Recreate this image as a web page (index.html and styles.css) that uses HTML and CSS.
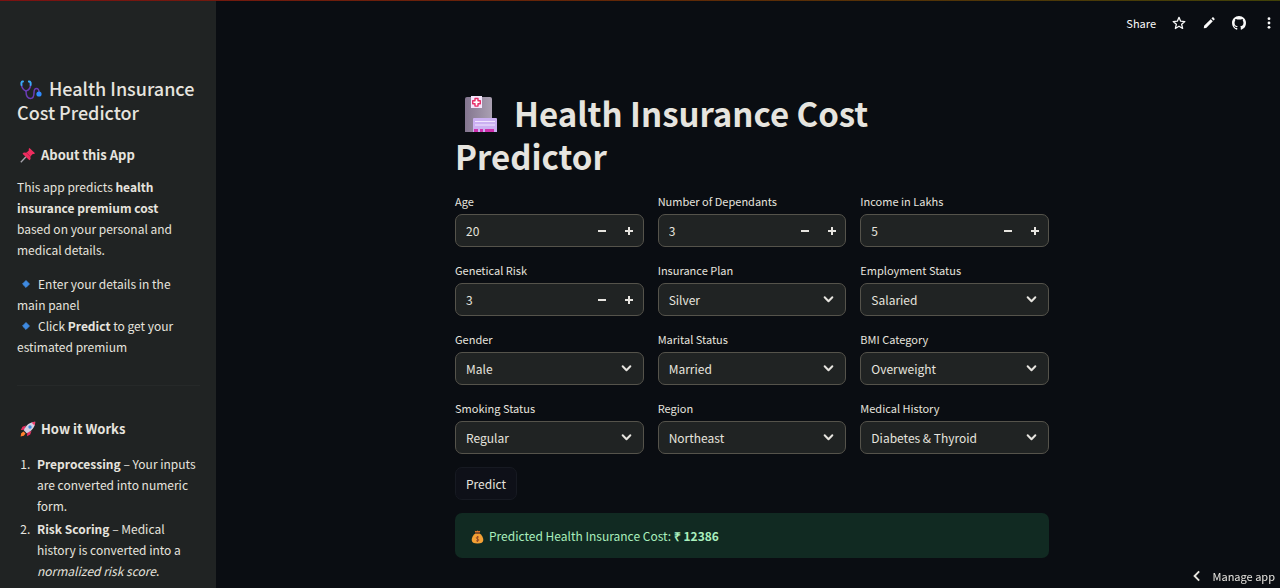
FILE: index.html
```html
<!DOCTYPE html>
<html lang="en">
<head>
<meta charset="utf-8">
<meta name="viewport" content="width=device-width, initial-scale=1">
<title>Health Insurance Cost Predictor</title>
<link rel="stylesheet" href="styles.css">
</head>
<body>
<svg class="sprite" aria-hidden="true">
  <symbol id="minus" viewBox="0 0 8 8"><path d="M0 3h8v2H0z"/></symbol>
  <symbol id="plus" viewBox="0 0 8 8"><path d="M3 0h2v3h3v2H5v3H3V5H0V3h3z"/></symbol>
  <symbol id="chevron" viewBox="0 0 10 10"><path d="M1.5 3 5 6.6 8.5 3" fill="none" stroke="currentColor" stroke-width="1.8" stroke-linecap="round" stroke-linejoin="round"/></symbol>
  <symbol id="diamond" viewBox="0 0 8 8"><path d="M4 .6 7.4 4 4 7.4.6 4z" fill="#3f8ae0" stroke="#3f8ae0" stroke-linejoin="round"/></symbol>
</svg>
<div class="decoration"></div>
<div class="app">
  <aside class="sidebar">
    <h2 class="sidebar-title"><svg class="icon-stethoscope" viewBox="0 0 22 20" aria-hidden="true"><g fill="none" stroke-linecap="round"><path d="M3 1.500C1 1.500 1.400 3 1.500 5c.3 3 2 5 4.500 6C9 10 10.500 8 10.600 5c.1-2 .3-3.500-1.800-3.500" stroke="#6a3cb4" stroke-width="1.600"/><path d="M3 1.500C1 1.500 1.400 3 1.500 5M8.800 1.500c2.100 0 1.900 1.500 1.800 3.500" stroke="#35aef5" stroke-width="1.800"/><path d="M6 11c0 4 1 7.500 4.500 7.500S14 15 14 12.500s1-4 2.500-4 2.500 1.500 2.700 4" stroke="#6a3cb4" stroke-width="1.500"/></g><circle cx="19" cy="14" r="2.600" fill="#2f8cff"/></svg>Health Insurance Cost Predictor</h2>
    <h3 class="sidebar-heading"><svg class="icon-heading" viewBox="0 0 16 16" aria-hidden="true"><path d="M.8 15.200 6 9.800" stroke="#a7a5ad" stroke-width="1.300"/><path d="m9.500 1 5.500 5.200-1 .9-1.200-.2-2.500 2.600.3 2.400-1.200 1.300L2.500 6.700l1.300-1.200 2.600.2 2.600-2.500L8.600 2z" fill="#ee2d5e"/><path d="m6.400 5.700 4 3.800" stroke="#b51d50"/></svg>About this App</h3>
    <p class="copy">This app predicts <strong>health insurance premium cost</strong><br>based on your personal and medical details.</p>
    <p class="copy"><svg class="icon-diamond" aria-hidden="true"><use href="#diamond"/></svg>Enter your details in the main panel<br><svg class="icon-diamond" aria-hidden="true"><use href="#diamond"/></svg>Click <strong>Predict</strong> to get your estimated premium</p>
    <hr class="divider">
    <h3 class="sidebar-heading"><svg class="icon-heading" viewBox="0 0 16 16" aria-hidden="true"><path d="M6 4.500 2.500 5.800.8 9l3.700-.3zM11.500 10l-1.300 3.500L7 15.200l.3-3.700z" fill="#e82e63"/><path d="M3.800 9.300C6 4 10 1 15.200.8 15.200 6 12 10 6.700 12.200z" fill="#d5cfe3"/><path d="M11.500 1.600c1.200-.5 2.500-.8 3.700-.8 0 1.300-.3 2.600-.8 3.800z" fill="#f13b6b"/><circle cx="10" cy="6" r="1.700" fill="#3d8ddd"/><path d="m3.500 10.500 2 2-1.700 2.300L.6 15.400l.6-3.200z" fill="#ff822d"/></svg>How it Works</h3>
    <ol class="steps">
      <li><strong>Preprocessing</strong> – Your inputs are converted into numeric form.</li>
      <li><strong>Risk Scoring</strong> – Medical history is converted into a <em>normalized risk score</em>.</li>
    </ol>
  </aside>
  <main class="main">
    <header class="toolbar">
      <button class="tool" type="button">Share</button>
      <button class="tool" type="button" aria-label="Favorite"><svg viewBox="0 0 14 14"><path d="m7 1.300 1.650 3.900 4.200.36-3.200 2.760.98 4.130L7 10.250l-3.630 2.200.98-4.130-3.200-2.760 4.200-.36z" fill="none" stroke="currentColor" stroke-width="1.300" stroke-linejoin="round"/></svg></button>
      <button class="tool" type="button" aria-label="Edit"><svg viewBox="0 0 14 14"><path d="m1.800 12.200.3-2.400 6.600-6.600 2.100 2.100-6.600 6.600zM9.500 2.400l.8-.8c.4-.4.900-.4 1.300 0l.8.8c.4.4.4.9 0 1.300l-.8.8z" fill="currentColor"/></svg></button>
      <button class="tool" type="button" aria-label="View source"><svg viewBox="0 0 16 16"><path d="M8 0C3.580 0 0 3.580 0 8c0 3.540 2.290 6.530 5.470 7.590.4.070.55-.17.55-.38 0-.19-.01-.82-.01-1.490-2.010.37-2.530-.49-2.690-.94-.09-.23-.48-.94-.82-1.130-.28-.15-.68-.52-.01-.53.63-.01 1.080.58 1.230.82.72 1.210 1.870.87 2.330.66.07-.52.28-.87.51-1.070-1.780-.2-3.640-.89-3.640-3.950 0-.87.31-1.590.82-2.150-.08-.2-.36-1.020.08-2.120 0 0 .67-.21 2.200.82.64-.18 1.320-.27 2-.27s1.360.09 2 .27c1.530-1.040 2.200-.82 2.200-.82.44 1.100.16 1.920.08 2.120.51.56.82 1.270.82 2.150 0 3.070-1.870 3.750-3.650 3.950.29.25.54.73.54 1.480 0 1.070-.01 1.930-.01 2.200 0 .21.15.46.55.38A8.010 8.010 0 0 0 16 8c0-4.420-3.580-8-8-8z" fill="currentColor"/></svg></button>
      <button class="tool" type="button" aria-label="More options"><svg viewBox="0 0 14 14"><g fill="currentColor"><circle cx="7" cy="2.700" r="1.400"/><circle cx="7" cy="7" r="1.400"/><circle cx="7" cy="11.300" r="1.400"/></g></svg></button>
    </header>
    <form class="content">
      <h1 class="title"><svg class="icon-hospital" viewBox="0 0 33 36" aria-hidden="true"><defs><linearGradient id="wall"><stop offset="0" stop-color="#83758f"/><stop offset="1" stop-color="#aaa0b2"/></linearGradient></defs><path d="M2 1h23q2 0 2 2v33H0V3q0-2 2-2z" fill="url(#wall)"/><path d="M6 0h11v12H6z" fill="#f5e5fb"/><path d="M10 2.500h3v2.300h2.300v3H13v2.300h-3V7.800H7.700v-3H10z" fill="#fff" stroke="#e72f68" stroke-width="1.400" stroke-linejoin="round"/><path d="M9 22h22q1 0 1 1v13H8V23q0-1 1-1z" fill="#cbb0f2"/><path d="M10 25.500h20M10 29h20" stroke="#f2e6ff" stroke-width="1.200"/><path d="M9 33h4v3H9zm6 0h3v3h-3zm5 0h9v3h-9z" fill="#cf31ad"/></svg>Health Insurance Cost Predictor</h1>
      <div class="grid">
        <div class="field"><label for="age">Age</label><div class="number"><input id="age" type="text" inputmode="numeric" value="20"><button type="button" aria-label="Decrease age"><svg><use href="#minus"/></svg></button><button type="button" aria-label="Increase age"><svg><use href="#plus"/></svg></button></div></div>
        <div class="field"><label for="dependants">Number of Dependants</label><div class="number"><input id="dependants" type="text" inputmode="numeric" value="3"><button type="button" aria-label="Decrease dependants"><svg><use href="#minus"/></svg></button><button type="button" aria-label="Increase dependants"><svg><use href="#plus"/></svg></button></div></div>
        <div class="field"><label for="income">Income in Lakhs</label><div class="number"><input id="income" type="text" inputmode="numeric" value="5"><button type="button" aria-label="Decrease income"><svg><use href="#minus"/></svg></button><button type="button" aria-label="Increase income"><svg><use href="#plus"/></svg></button></div></div>
        <div class="field"><label for="risk">Genetical Risk</label><div class="number"><input id="risk" type="text" inputmode="numeric" value="3"><button type="button" aria-label="Decrease risk"><svg><use href="#minus"/></svg></button><button type="button" aria-label="Increase risk"><svg><use href="#plus"/></svg></button></div></div>
        <div class="field"><label for="plan">Insurance Plan</label><div class="select"><select id="plan"><option>Silver</option></select><svg><use href="#chevron"/></svg></div></div>
        <div class="field"><label for="employment">Employment Status</label><div class="select"><select id="employment"><option>Salaried</option></select><svg><use href="#chevron"/></svg></div></div>
        <div class="field"><label for="gender">Gender</label><div class="select"><select id="gender"><option>Male</option></select><svg><use href="#chevron"/></svg></div></div>
        <div class="field"><label for="marital">Marital Status</label><div class="select"><select id="marital"><option>Married</option></select><svg><use href="#chevron"/></svg></div></div>
        <div class="field"><label for="bmi">BMI Category</label><div class="select"><select id="bmi"><option>Overweight</option></select><svg><use href="#chevron"/></svg></div></div>
        <div class="field"><label for="smoking">Smoking Status</label><div class="select"><select id="smoking"><option>Regular</option></select><svg><use href="#chevron"/></svg></div></div>
        <div class="field"><label for="region">Region</label><div class="select"><select id="region"><option>Northeast</option></select><svg><use href="#chevron"/></svg></div></div>
        <div class="field"><label for="history">Medical History</label><div class="select"><select id="history"><option>Diabetes &amp; Thyroid</option></select><svg><use href="#chevron"/></svg></div></div>
      </div>
      <button class="predict" type="button">Predict</button>
      <div class="alert" role="status"><svg class="icon-money" viewBox="0 0 13 14" aria-hidden="true"><path d="M4.300 3.500h4.400C11 5 12.300 7.500 12.300 10c0 2.500-2 3.500-5.800 3.500S.7 12.500.7 10C.7 7.500 2 5 4.300 3.500z" fill="#f4a034"/><path d="m4.300 2.500-.6-1.800 1.600.5L6.500.4l1.200.8L9.300.7l-.6 1.800z" fill="#e87b2c"/><path d="M4 3h5" stroke="#8e4627" stroke-width="1.200"/><path d="M8 7.200C7 6.500 5.200 6.800 5.200 7.900c0 1.300 2.700.7 2.700 2.100 0 1.200-1.900 1.300-2.900.6M6.500 6v6" fill="none" stroke="#944827" stroke-width=".9"/></svg>Predicted Health Insurance Cost: <strong>₹ 12386</strong></div>
    </form>
  </main>
</div>
<button class="manage" type="button"><svg viewBox="0 0 10 10" aria-hidden="true"><path d="M6.800 1.200 3 5l3.800 3.800" fill="none" stroke="currentColor" stroke-width="1.600"/></svg>Manage app</button>
</body>
</html>
```

FILE: styles.css
```css
* { box-sizing: border-box; }

body {
  margin: 0;
  background: #0a0d12;
  color: #e6e4df;
  font: 12px/21px "Source Sans Pro", "Noto Sans CJK SC", sans-serif;
}

button, input, select { font: inherit; color: inherit; }
button { padding: 0; border: 0; background: none; }
h1, h2, h3, p { margin: 0; }
.sprite { display: none; }

.decoration {
  position: fixed;
  z-index: 2;
  inset: 0 0 auto;
  height: 1px;
  background: linear-gradient(90deg, #7c1212, #622806 50%, #414208);
}

.app { display: flex; height: 100vh; }

.sidebar {
  flex: 0 0 216px;
  padding: 76px 16px 0 17px;
  overflow: hidden;
  background: #202323;
}

.sidebar-title { font-size: 18px; line-height: 24px; font-weight: 500; }
.sidebar-heading { margin: 21px 0 11px; font-size: 13px; line-height: 20px; font-weight: 700; }
.copy { margin-bottom: 13px; }

.icon-stethoscope { width: 22px; height: 20px; margin: 0 7px 0 3px; vertical-align: -4px; }
.icon-heading { width: 16px; height: 16px; margin: 0 5px 0 3px; vertical-align: -3px; }
.icon-diamond { width: 8px; height: 8px; margin: 0 8px 0 5px; vertical-align: 1px; }

.divider { height: 1px; margin: 28px 0 33px; border: 0; background: #262929; }

.steps { margin: 14px 0 0; padding-left: 16px; }
.steps li { margin-bottom: 2px; padding-left: 4px; }

.main { flex: 1; min-width: 0; padding-left: 8px; overflow: hidden; }

.toolbar {
  display: flex;
  justify-content: flex-end;
  align-items: center;
  gap: 16px;
  height: 46px;
  padding-right: 4px;
  font-size: 11px;
}
.tool { display: flex; color: #fafafa; }
.tool svg { width: 14px; height: 14px; }

.content {
  display: flex;
  flex-direction: column;
  align-items: flex-start;
  max-width: 594px;
  margin: 46px auto 0;
}

.title { padding-right: 40px; font-size: 33px; line-height: 43px; font-weight: 700; }
.icon-hospital { width: 33px; height: 36px; margin: 0 16px 0 10px; vertical-align: -5px; }

.grid {
  display: grid;
  grid-template-columns: repeat(3, minmax(0, 1fr));
  gap: 14px;
  width: 100%;
  margin-top: 14px;
}
.field label { display: block; margin-bottom: 4px; font-size: 11px; line-height: 18px; }

.number, .select {
  display: flex;
  align-items: center;
  height: 33px;
  border: 1px solid #55534b;
  border-radius: 7px;
  background: #202323;
}
.number input { flex: 1; min-width: 0; height: 100%; padding: 0 0 0 10px; border: 0; background: none; outline: 0; }
.number button { display: flex; justify-content: center; align-items: center; width: 27px; height: 100%; }
.number svg { width: 8px; height: 8px; fill: currentColor; }

.select { display: grid; }
.select select { grid-area: 1 / 1; width: 100%; height: 31px; padding: 0 30px 0 10px; border: 0; background: none; appearance: none; outline: 0; }
.select svg { grid-area: 1 / 1; justify-self: end; width: 11px; height: 11px; margin-right: 11px; pointer-events: none; }

.predict {
  height: 33px;
  margin-top: 13px;
  padding: 0 10px;
  border: 1px solid #171a22;
  border-radius: 7px;
  background: #0e1018;
}

.alert {
  width: 100%;
  margin-top: 13px;
  padding: 12px 16px;
  border-radius: 7px;
  background: #112a22;
  color: #a9efbd;
}
.icon-money { width: 13px; height: 14px; margin-right: 5px; vertical-align: -3px; }

.manage {
  position: fixed;
  right: 5px;
  bottom: 0;
  display: flex;
  align-items: center;
  gap: 10px;
  height: 24px;
  font-size: 11px;
}
.manage svg { width: 12px; height: 12px; }
```
